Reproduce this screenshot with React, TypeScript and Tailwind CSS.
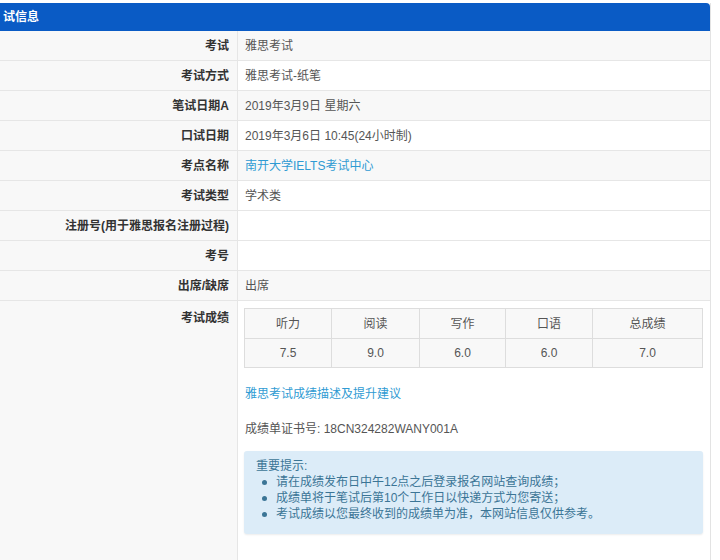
const rows: { label: string; value: string; link?: boolean; blur?: boolean }[] = [
  { label: "考试", value: "雅思考试" },
  { label: "考试方式", value: "雅思考试-纸笔" },
  { label: "笔试日期A", value: "2019年3月9日 星期六" },
  { label: "口试日期", value: "2019年3月6日 10:45(24小时制)" },
  { label: "考点名称", value: "南开大学IELTS考试中心", link: true },
  { label: "考试类型", value: "学术类" },
  { label: "注册号(用于雅思报名注册过程)", value: "", blur: true },
  { label: "考号", value: "", blur: true },
  { label: "出席/缺席", value: "出席" },
];

const scores = [
  ["听力", "7.5"],
  ["阅读", "9.0"],
  ["写作", "6.0"],
  ["口语", "6.0"],
  ["总成绩", "7.0"],
];

const tips = [
  "请在成绩发布日中午12点之后登录报名网站查询成绩；",
  "成绩单将于笔试后第10个工作日以快递方式为您寄送；",
  "考试成绩以您最终收到的成绩单为准，本网站信息仅供参考。",
];

export default function App() {
  return (
    <div
      className="h-[560px] w-[720px] overflow-hidden bg-white text-[12px] text-[#555]"
      style={{ fontFamily: '"Liberation Sans", "Noto Sans CJK SC", sans-serif' }}
    >
      <div className="mt-[3px] w-[711px] border-r border-[#e3e3e3]">
        <div className="flex h-[28px] items-center rounded-tr-[4px] bg-[#0a5bc5] pl-[3px] text-[12px] font-bold text-white">
          试信息
        </div>
        {rows.map((r, i) => (
          <div
            key={r.label}
            className="grid h-[30px] grid-cols-[238px_1fr] border-b border-[#e6e6e6]"
          >
            <div className="flex items-center justify-end border-r border-[#e6e6e6] bg-[#f8f8f8] pr-[8px] font-bold text-[#333]">
              {r.label}
            </div>
            <div
              className={
                "flex items-center pl-[7px] " +
                (r.blur ? "bg-white" : i % 2 === 0 ? "bg-[#f8f8f8]" : "bg-white")
              }
            >
              <span className={r.link ? "text-[#2f9bd3]" : ""}>{r.value}</span>
            </div>
          </div>
        ))}
        <div className="grid h-[260px] grid-cols-[238px_1fr]">
          <div className="flex justify-end border-r border-[#e6e6e6] bg-[#f8f8f8] pr-[8px] pt-[8px] font-bold text-[#333]">
            考试成绩
          </div>
          <div className="bg-white pl-[6px] pr-[7px] pt-[7px]">
            <div className="grid grid-cols-[87px_88px_86px_87px_1fr] border-l border-t border-[#dddddd] bg-[#f8f8f8]">
              {scores.map(([h]) => (
                <div
                  key={h}
                  className="flex h-[30px] items-center justify-center border-b border-r border-[#dddddd]"
                >
                  {h}
                </div>
              ))}
              {scores.map(([h, v]) => (
                <div
                  key={h + v}
                  className="flex h-[29px] items-center justify-center border-b border-r border-[#dddddd]"
                >
                  {v}
                </div>
              ))}
            </div>
            <div className="mt-[17px] pl-[1px] text-[#2f9bd3]">雅思考试成绩描述及提升建议</div>
            <div className="mt-[17px] pl-[1px]">成绩单证书号: 18CN324282WANY001A</div>
            <div className="mt-[13px] rounded-[3px] bg-[#dcecf8] px-[12px] pb-[12px] pt-[7px] leading-[16px] text-[#3b7596] shadow-[0_1px_2px_rgba(0,0,0,0.08)]">
              <div>重要提示:</div>
              <ul>
                {tips.map((t) => (
                  <li key={t} className="flex items-center">
                    <span className="ml-[6px] mr-[9px] inline-block h-[5px] w-[5px] rounded-full bg-[#3b7596]" />
                    {t}
                  </li>
                ))}
              </ul>
            </div>
          </div>
        </div>
      </div>
    </div>
  );
}
